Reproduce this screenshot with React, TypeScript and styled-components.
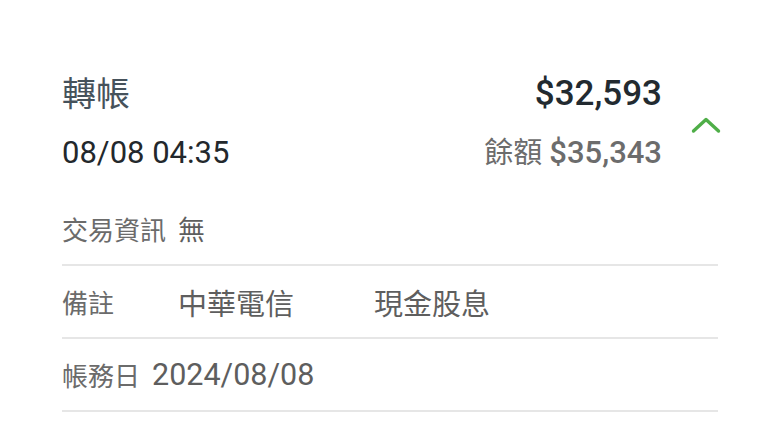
import React from 'react';
import styled, { createGlobalStyle } from 'styled-components';

const GlobalStyle = createGlobalStyle`
  html, body {
    margin: 0;
    padding: 0;
    background: #ffffff;
  }
  body {
    font-family: Roboto, "Noto Sans CJK TC", "Noto Sans", sans-serif;
  }
`;

const Page = styled.div`
  width: 780px;
  height: 445px;
  box-sizing: border-box;
  padding: 74px 62px 0 62px;
  background: #fff;
  overflow: hidden;
`;

const Header = styled.div`
  display: grid;
  grid-template-columns: 1fr auto 56px;
  grid-template-rows: 40px 40px;
  row-gap: 19px;
  align-items: center;
`;

const Title = styled.div`
  font-size: 34px;
  line-height: 40px;
  color: #46525b;
`;

const DateText = styled.div`
  font-size: 31px;
  line-height: 40px;
  color: #23282c;
`;

const Amount = styled.div`
  font-size: 35px;
  line-height: 40px;
  font-weight: 500;
  color: #222a30;
  text-align: right;
`;

const Balance = styled.div`
  font-size: 29px;
  line-height: 40px;
  color: #6c6c6c;
  text-align: right;

  b {
    font-weight: 500;
    font-size: 31px;
  }
`;

const Toggle = styled.div`
  grid-column: 3;
  grid-row: 1 / span 2;
  display: flex;
  justify-content: flex-end;
  align-items: center;
  padding-top: 2px;
  margin-right: -3px;
`;

const Details = styled.div`
  margin-top: 20px;
`;

const Row = styled.div`
  height: 71px;
  display: flex;
  align-items: center;
  border-bottom: 2px solid #e6e6e6;
`;

const Label = styled.span<{ $minWidth?: number }>`
  font-size: 26px;
  color: #6b6b6b;
  min-width: ${(p) => (p.$minWidth ? `${p.$minWidth}px` : 'auto')};
  margin-right: 12px;
  white-space: nowrap;
`;

const Value = styled.span<{ $size?: number }>`
  font-size: ${(p) => p.$size ?? 29}px;
  color: #5e5e5e;
  white-space: nowrap;
  & + & {
    margin-left: 80px;
  }
`;

const ChevronUp = () => (
  <svg width="30" height="18" viewBox="0 0 30 18">
    <path
      d="M2.5 15 L15 3.5 L27.5 15"
      fill="none"
      stroke="#4fae48"
      strokeWidth="3.4"
      strokeLinecap="round"
      strokeLinejoin="round"
    />
  </svg>
);

export default function App() {
  return (
    <Page>
      <GlobalStyle />
      <Header>
        <Title>轉帳</Title>
        <Amount>$32,593</Amount>
        <Toggle>
          <ChevronUp />
        </Toggle>
        <DateText>08/08 04:35</DateText>
        <Balance>
          餘額 <b>$35,343</b>
        </Balance>
      </Header>
      <Details>
        <Row>
          <Label>交易資訊</Label>
          <Value $size={27}>無</Value>
        </Row>
        <Row>
          <Label $minWidth={104}>備註</Label>
          <Value>中華電信</Value>
          <Value>現金股息</Value>
        </Row>
        <Row>
          <Label>帳務日</Label>
          <Value $size={30.5}>2024/08/08</Value>
        </Row>
      </Details>
    </Page>
  );
}
